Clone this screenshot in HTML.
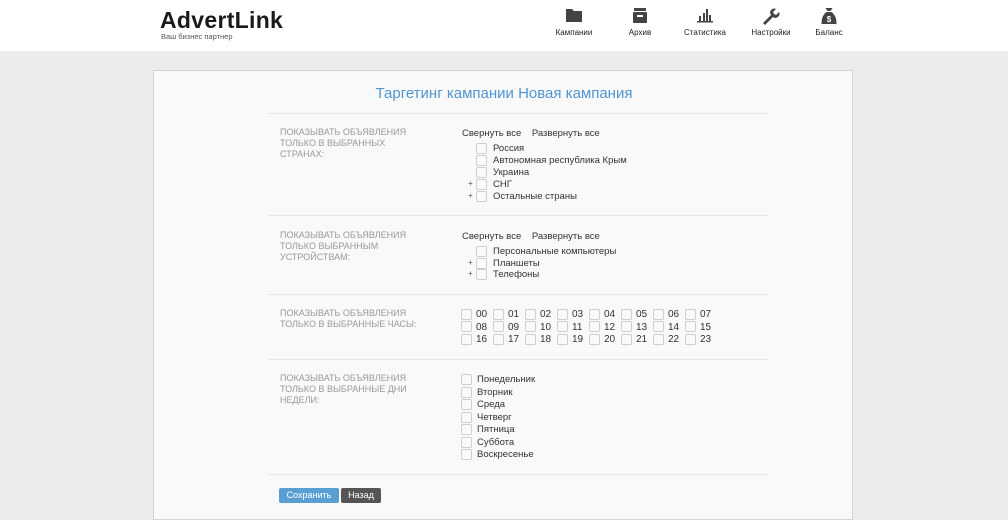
<!DOCTYPE html><html><head><meta charset="utf-8"><style>
*{margin:0;padding:0;box-sizing:border-box}
body{width:1008px;height:509px;overflow:hidden;background:#ececec;font-family:"Liberation Sans","DejaVu Sans",sans-serif;position:relative;color:#333}
.a{position:absolute;white-space:nowrap}
.hdr{position:absolute;left:0;top:0;width:1008px;height:51px;background:#fff}
.nav{position:absolute;top:28px;font-size:8px;color:#222;transform:translateX(-50%)}
.ic{position:absolute;top:7px;transform:translateX(-50%)}
.panel{position:absolute;left:153px;top:70px;width:700px;height:450px;background:#f9f9f9;border:1px solid #d4d4d4}
.sep{position:absolute;left:268px;width:500px;height:1px;background:#e6e6e6}
.lbl{position:absolute;left:280px;font-size:9px;line-height:11px;color:#999;text-transform:uppercase}
.cb{position:absolute;width:11px;height:11px;background:#fafafa;border:1px solid #cfcfcf;border-radius:2px}
.t{position:absolute;font-size:9.5px;color:#333;white-space:nowrap;line-height:11px}
.pl{position:absolute;font-size:8px;color:#555}
</style></head><body>
<div class="hdr"></div>
<div class="a" style="left:160px;top:7px;font-size:23px;font-weight:bold;color:#1a1a1a;letter-spacing:0.3px">AdvertLink</div>
<div class="a" style="left:161px;top:32px;font-size:7.5px;color:#555">Ваш бизнес партнер</div>

<svg class="ic" style="left:574px" width="18" height="16" viewBox="0 0 18 16"><path d="M1 2h6l2 2h8v11H1z" fill="#444"/></svg>
<svg class="ic" style="left:640px" width="16" height="17" viewBox="0 0 16 17"><rect x="2" y="1" width="12" height="3" fill="#444"/><rect x="1" y="5" width="14" height="11" rx="1" fill="#444"/><rect x="5" y="8" width="6" height="2" fill="#fff"/></svg>
<svg class="ic" style="left:705px" width="18" height="16" viewBox="0 0 18 16"><rect x="3" y="9" width="2" height="5" fill="#444"/><rect x="7" y="6" width="2" height="8" fill="#444"/><rect x="10" y="2" width="2" height="12" fill="#444"/><rect x="13" y="8" width="2" height="6" fill="#444"/><rect x="1" y="14" width="16" height="1.5" fill="#444"/></svg>
<svg class="ic" style="left:771px" width="18" height="18" viewBox="0 0 18 18"><path d="M1 16l8-8a4 4 0 0 1 5-6l-3 3 1 2 2 1 3-3a4 4 0 0 1-6 5l-8 8z" fill="#444"/></svg>
<svg class="ic" style="left:829px" width="15" height="18" viewBox="0 0 15 18"><path d="M4 1h7l-2 3h-3z" fill="#444"/><path d="M5 5h5c4 3 5 7 5 12H0C0 12 1 8 5 5z" fill="#444"/><text x="7.5" y="15" font-size="8" fill="#fff" text-anchor="middle" font-family="Liberation Sans" font-weight="bold">$</text></svg>
<div class="nav" style="left:574px">Кампании</div>
<div class="nav" style="left:640px">Архив</div>
<div class="nav" style="left:705px">Статистика</div>
<div class="nav" style="left:771px">Настройки</div>
<div class="nav" style="left:829px">Баланс</div>

<div class="panel"></div>
<div class="a" style="left:0;width:1008px;text-align:center;top:85px;font-size:15px;color:#4f95cf">Таргетинг кампании Новая кампания</div>
<div class="sep" style="top:113px"></div>
<div class="sep" style="top:215px"></div>
<div class="sep" style="top:294px"></div>
<div class="sep" style="top:359px"></div>
<div class="sep" style="top:474px"></div>

<div class="lbl" style="top:127px">Показывать объявления<br>только в выбранных<br>странах:</div>
<div class="t" style="left:462px;top:128px">Свернуть все&nbsp;&nbsp;&nbsp;&nbsp;Развернуть все</div>
<div class="cb" style="left:476px;top:143px"></div><div class="t" style="left:493px;top:143px">Россия</div>
<div class="cb" style="left:476px;top:155px"></div><div class="t" style="left:493px;top:155px">Автономная республика Крым</div>
<div class="cb" style="left:476px;top:167px"></div><div class="t" style="left:493px;top:167px">Украина</div>
<div class="pl" style="left:468px;top:179px">+</div><div class="cb" style="left:476px;top:179px"></div><div class="t" style="left:493px;top:179px">СНГ</div>
<div class="pl" style="left:468px;top:191px">+</div><div class="cb" style="left:476px;top:191px"></div><div class="t" style="left:493px;top:191px">Остальные страны</div>

<div class="lbl" style="top:230px">Показывать объявления<br>только выбранным<br>устройствам:</div>
<div class="t" style="left:462px;top:231px">Свернуть все&nbsp;&nbsp;&nbsp;&nbsp;Развернуть все</div>
<div class="cb" style="left:476px;top:246px"></div><div class="t" style="left:493px;top:246px">Персональные компьютеры</div>
<div class="pl" style="left:468px;top:258px">+</div><div class="cb" style="left:476px;top:258px"></div><div class="t" style="left:493px;top:258px">Планшеты</div>
<div class="pl" style="left:468px;top:269px">+</div><div class="cb" style="left:476px;top:269px"></div><div class="t" style="left:493px;top:269px">Телефоны</div>

<div class="lbl" style="top:308px">Показывать объявления<br>только в выбранные часы:</div>

<div class="lbl" style="top:373px">Показывать объявления<br>только в выбранные дни<br>недели:</div>
<div class="cb" style="left:461px;top:374px"></div><div class="t" style="left:477px;top:374px">Понедельник</div>
<div class="cb" style="left:461px;top:387px"></div><div class="t" style="left:477px;top:387px">Вторник</div>
<div class="cb" style="left:461px;top:399px"></div><div class="t" style="left:477px;top:399px">Среда</div>
<div class="cb" style="left:461px;top:412px"></div><div class="t" style="left:477px;top:412px">Четверг</div>
<div class="cb" style="left:461px;top:424px"></div><div class="t" style="left:477px;top:424px">Пятница</div>
<div class="cb" style="left:461px;top:437px"></div><div class="t" style="left:477px;top:437px">Суббота</div>
<div class="cb" style="left:461px;top:449px"></div><div class="t" style="left:477px;top:449px">Воскресенье</div>

<div class="a" style="left:279px;top:488px;width:60px;height:15px;background:#5a9fd4;border-radius:2px;color:#fff;font-size:9px;line-height:15px;text-align:center">Сохранить</div>
<div class="a" style="left:341px;top:488px;width:40px;height:15px;background:#555;border-radius:2px;color:#fff;font-size:9px;line-height:15px;text-align:center">Назад</div>

<div class="cb" style="left:461px;top:309px"></div><div class="t" style="left:476px;top:309px;font-size:10px">00</div>
<div class="cb" style="left:493px;top:309px"></div><div class="t" style="left:508px;top:309px;font-size:10px">01</div>
<div class="cb" style="left:525px;top:309px"></div><div class="t" style="left:540px;top:309px;font-size:10px">02</div>
<div class="cb" style="left:557px;top:309px"></div><div class="t" style="left:572px;top:309px;font-size:10px">03</div>
<div class="cb" style="left:589px;top:309px"></div><div class="t" style="left:604px;top:309px;font-size:10px">04</div>
<div class="cb" style="left:621px;top:309px"></div><div class="t" style="left:636px;top:309px;font-size:10px">05</div>
<div class="cb" style="left:653px;top:309px"></div><div class="t" style="left:668px;top:309px;font-size:10px">06</div>
<div class="cb" style="left:685px;top:309px"></div><div class="t" style="left:700px;top:309px;font-size:10px">07</div>
<div class="cb" style="left:461px;top:321px"></div><div class="t" style="left:476px;top:322px;font-size:10px">08</div>
<div class="cb" style="left:493px;top:321px"></div><div class="t" style="left:508px;top:322px;font-size:10px">09</div>
<div class="cb" style="left:525px;top:321px"></div><div class="t" style="left:540px;top:322px;font-size:10px">10</div>
<div class="cb" style="left:557px;top:321px"></div><div class="t" style="left:572px;top:322px;font-size:10px">11</div>
<div class="cb" style="left:589px;top:321px"></div><div class="t" style="left:604px;top:322px;font-size:10px">12</div>
<div class="cb" style="left:621px;top:321px"></div><div class="t" style="left:636px;top:322px;font-size:10px">13</div>
<div class="cb" style="left:653px;top:321px"></div><div class="t" style="left:668px;top:322px;font-size:10px">14</div>
<div class="cb" style="left:685px;top:321px"></div><div class="t" style="left:700px;top:322px;font-size:10px">15</div>
<div class="cb" style="left:461px;top:334px"></div><div class="t" style="left:476px;top:334px;font-size:10px">16</div>
<div class="cb" style="left:493px;top:334px"></div><div class="t" style="left:508px;top:334px;font-size:10px">17</div>
<div class="cb" style="left:525px;top:334px"></div><div class="t" style="left:540px;top:334px;font-size:10px">18</div>
<div class="cb" style="left:557px;top:334px"></div><div class="t" style="left:572px;top:334px;font-size:10px">19</div>
<div class="cb" style="left:589px;top:334px"></div><div class="t" style="left:604px;top:334px;font-size:10px">20</div>
<div class="cb" style="left:621px;top:334px"></div><div class="t" style="left:636px;top:334px;font-size:10px">21</div>
<div class="cb" style="left:653px;top:334px"></div><div class="t" style="left:668px;top:334px;font-size:10px">22</div>
<div class="cb" style="left:685px;top:334px"></div><div class="t" style="left:700px;top:334px;font-size:10px">23</div>
</body></html>
